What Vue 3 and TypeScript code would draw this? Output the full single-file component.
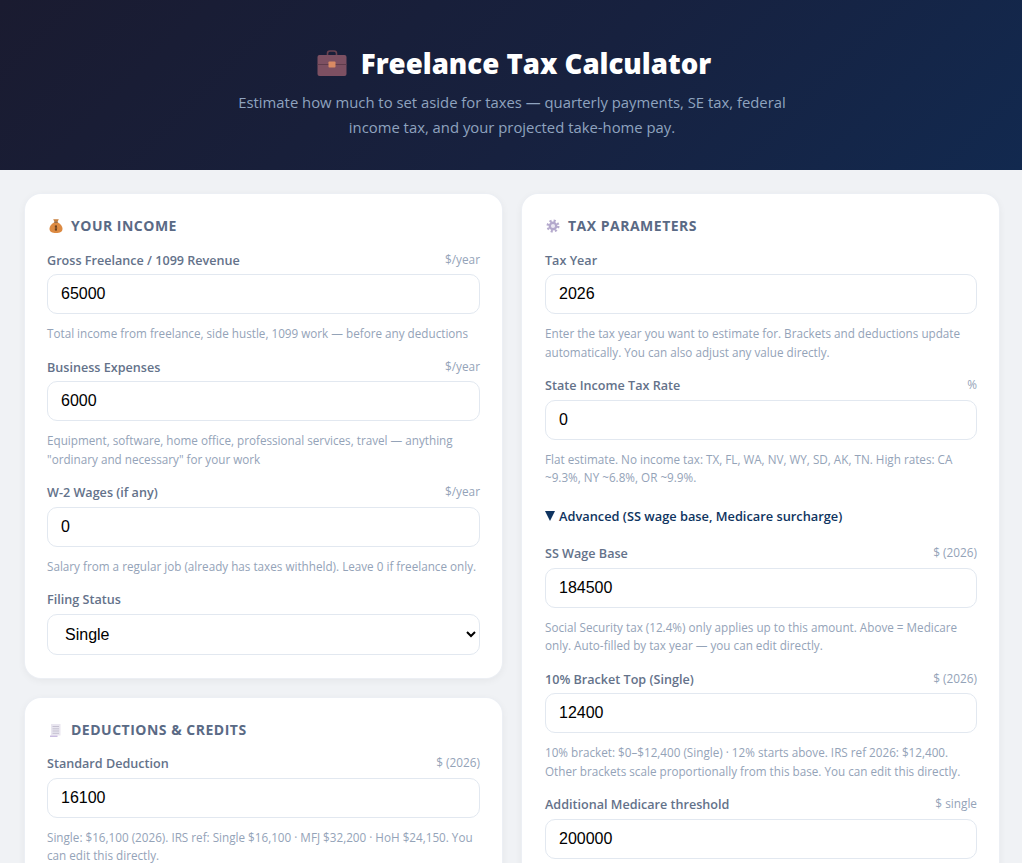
<script setup lang="ts">
interface Field {
  label: string
  unit?: string
  value: string
  hint: string
}

const income: Field[] = [
  { label: 'Gross Freelance / 1099 Revenue', unit: '$/year', value: '65000', hint: 'Total income from freelance, side hustle, 1099 work — before any deductions' },
  { label: 'Business Expenses', unit: '$/year', value: '6000', hint: 'Equipment, software, home office, professional services, travel — anything "ordinary and necessary" for your work' },
  { label: 'W-2 Wages (if any)', unit: '$/year', value: '0', hint: 'Salary from a regular job (already has taxes withheld). Leave 0 if freelance only.' },
]
const deductions: Field[] = [
  { label: 'Standard Deduction', unit: '$ (2026)', value: '16100', hint: 'Single: $16,100 (2026). IRS ref: Single $16,100 · MFJ $32,200 · HoH $24,150. You can edit this directly.' },
]
const params: Field[] = [
  { label: 'Tax Year', value: '2026', hint: 'Enter the tax year you want to estimate for. Brackets and deductions update automatically. You can also adjust any value directly.' },
  { label: 'State Income Tax Rate', unit: '%', value: '0', hint: 'Flat estimate. No income tax: TX, FL, WA, NV, WY, SD, AK, TN. High rates: CA ~9.3%, NY ~6.8%, OR ~9.9%.' },
]
const advanced: Field[] = [
  { label: 'SS Wage Base', unit: '$ (2026)', value: '184500', hint: 'Social Security tax (12.4%) only applies up to this amount. Above = Medicare only. Auto-filled by tax year — you can edit directly.' },
  { label: '10% Bracket Top (Single)', unit: '$ (2026)', value: '12400', hint: '10% bracket: $0–$12,400 (Single) · 12% starts above. IRS ref 2026: $12,400. Other brackets scale proportionally from this base. You can edit this directly.' },
  { label: 'Additional Medicare threshold', unit: '$ single', value: '200000', hint: '' },
]
</script>

<template>
  <div class="page">
    <header class="hero">
      <h1 class="title">
        <svg class="brief" viewBox="0 0 30 26" aria-hidden="true">
          <path d="M10.5 5.500V3.500C10.5 2 11.800 1 13 1h4c1.200 0 2.500 1 2.500 2.500v2" fill="none" stroke="#6a4250" stroke-width="1.600" />
          <rect x="0.500" y="5" width="29" height="21" rx="2" fill="#7d5062" />
          <path d="M0.500 14.500h29" stroke="#5f3c4c" stroke-width="1" />
          <rect x="11.500" y="11.500" width="7" height="6" rx="0.800" fill="#d98a63" />
        </svg>
        <span>Freelance Tax Calculator</span>
      </h1>
      <p class="sub">Estimate how much to set aside for taxes — quarterly payments, SE tax, federal income tax, and your projected take-home pay.</p>
    </header>

    <main class="grid">
      <div class="col">
        <section class="card">
          <h2 class="head">
            <svg class="ico" viewBox="-1 0 16 16" aria-hidden="true">
              <path d="M5.200 1.200h5.600L9.500 3.800h-3z" fill="#c9803f" />
              <path d="M6 4.500h4c2.700 1.400 4.500 3.800 4.500 6.300 0 3.200-2.500 4.200-6.500 4.200s-6.500-1-6.500-4.200c0-2.500 1.800-4.900 4.500-6.300z" fill="#dc8a42" />
              <rect x="6.200" y="3.600" width="3.600" height="1.100" fill="#7a4a22" />
              <path d="M8 7v6M6.800 8.400h2.200M6.800 10h2.400M6.800 11.600h2.200" stroke="#5e3a1e" stroke-width="0.900" fill="none" />
            </svg>
            Your Income
          </h2>
          <div v-for="f in income" :key="f.label" class="field">
            <div class="lab"><label>{{ f.label }}</label><span v-if="f.unit" class="unit">{{ f.unit }}</span></div>
            <input class="inp" type="text" :value="f.value" />
            <p class="hint">{{ f.hint }}</p>
          </div>
          <div class="field last">
            <div class="lab"><label>Filing Status</label></div>
            <select class="inp sel">
              <option>Single</option>
              <option>Married Filing Jointly</option>
              <option>Head of Household</option>
            </select>
          </div>
        </section>

        <section class="card">
          <h2 class="head">
            <svg class="ico" viewBox="0 0 16 16" aria-hidden="true">
              <rect x="4" y="2" width="9.500" height="11.500" fill="#e9e6f0" />
              <path d="M5.500 4.500h6.500M5.500 6.800h6.500M5.500 9h6.500M5.500 11.300h6.500" stroke="#c4c0d0" stroke-width="1" />
              <rect x="3" y="13.500" width="7.500" height="1.500" fill="#c9bce0" />
            </svg>
            Deductions &amp; Credits
          </h2>
          <div v-for="f in deductions" :key="f.label" class="field">
            <div class="lab"><label>{{ f.label }}</label><span v-if="f.unit" class="unit">{{ f.unit }}</span></div>
            <input class="inp" type="text" :value="f.value" />
            <p class="hint">{{ f.hint }}</p>
          </div>
        </section>
      </div>

      <div class="col">
        <section class="card">
          <h2 class="head">
            <svg class="ico" viewBox="0 0 16 16" aria-hidden="true">
              <circle cx="8" cy="8" r="5.300" fill="none" stroke="#b5aacd" stroke-width="2.400" stroke-dasharray="2.100 2.060" />
              <circle cx="8" cy="8" r="4.400" fill="#b3a8cc" />
              <circle cx="8" cy="8" r="2.100" fill="#ebe7f2" />
            </svg>
            Tax Parameters
          </h2>
          <div v-for="f in params" :key="f.label" class="field">
            <div class="lab"><label>{{ f.label }}</label><span v-if="f.unit" class="unit">{{ f.unit }}</span></div>
            <input class="inp" type="text" :value="f.value" />
            <p class="hint">{{ f.hint }}</p>
          </div>
          <details class="adv" open>
            <summary>Advanced (SS wage base, Medicare surcharge)</summary>
            <div v-for="f in advanced" :key="f.label" class="field">
              <div class="lab"><label>{{ f.label }}</label><span v-if="f.unit" class="unit">{{ f.unit }}</span></div>
              <input class="inp" type="text" :value="f.value" />
              <p v-if="f.hint" class="hint">{{ f.hint }}</p>
            </div>
          </details>
        </section>
      </div>
    </main>
  </div>
</template>

<style scoped>
.page {
  height: 100vh;
  overflow: hidden;
  background: #f0f2f5;
  font-family: "Open Sans", "Noto Sans", sans-serif;
}
.hero {
  height: 170px;
  box-sizing: border-box;
  padding: 40px 24px 0 26px;
  text-align: center;
  background: linear-gradient(135deg, #1a1b30 0%, #17213f 55%, #12294f 100%);
}
.title {
  margin: 0;
  padding-left: 4px;
  display: flex;
  justify-content: center;
  align-items: center;
  gap: 14px;
  font-size: 27.600px;
  line-height: 46px;
  font-weight: 800;
  color: #fff;
}
.brief {
  width: 30px;
  height: 26px;
}
.sub {
  margin: 4px auto 0;
  max-width: 560px;
  font-size: 14.850px;
  line-height: 25px;
  color: #8fa3bf;
}
.grid {
  display: grid;
  grid-template-columns: 1fr 1fr;
  gap: 20px;
  padding: 24px 23px 0 25px;
}
.col {
  display: flex;
  flex-direction: column;
  gap: 20px;
  min-width: 0;
}
.col:last-child .card {
  padding-left: 23px;
}
.col:last-child .head {
  gap: 7px;
}
.card {
  background: #fff;
  border-radius: 16px;
  padding: 23px 22px;
  box-shadow: 0 0 0 1px #eceff4, 0 2px 8px rgba(0, 0, 0, 0.06);
}
.head {
  margin: 0 0 16.500px;
  display: flex;
  align-items: center;
  gap: 8px;
  font-size: 14px;
  line-height: 18px;
  font-weight: 700;
  letter-spacing: 0.5px;
  text-transform: uppercase;
  color: #5a6a85;
}
.ico {
  width: 16px;
  height: 16px;
}
.field {
  margin-bottom: 16px;
}
.field.last {
  margin-bottom: 0;
}
.lab {
  display: flex;
  justify-content: space-between;
  align-items: flex-start;
  margin-bottom: 4.500px;
  font-size: 12.600px;
  line-height: 18px;
  font-weight: 600;
  color: #64728a;
}
.unit {
  font-size: 11.800px;
  line-height: 14px;
  font-weight: 400;
  color: #94a3b8;
}
.inp {
  display: block;
  width: 100%;
  height: 40px;
  box-sizing: border-box;
  padding: 10px 13px;
  border: 1.500px solid #e2e8f0;
  border-radius: 10px;
  background: #fff;
  font-family: "Liberation Sans", Arial, sans-serif;
  font-size: 16px;
  color: #000;
  outline: none;
}
.sel {
  height: 41px;
}
.hint {
  margin: 10px 0 0;
  font-size: 11.700px;
  line-height: 18.500px;
  color: #94a3b8;
}
.adv {
  padding-top: 4px;
}
.adv summary {
  list-style: none;
  display: flex;
  align-items: center;
  gap: 4px;
  margin-bottom: 20.500px;
  font-size: 12.800px;
  line-height: 18px;
  font-weight: 600;
  color: #0f3460;
  cursor: pointer;
}
.adv summary::before {
  content: "";
  width: 0;
  height: 0;
  border-left: 5.500px solid transparent;
  border-right: 5.500px solid transparent;
  border-top: 10px solid #0f3460;
}
.adv summary::-webkit-details-marker {
  display: none;
}
</style>
